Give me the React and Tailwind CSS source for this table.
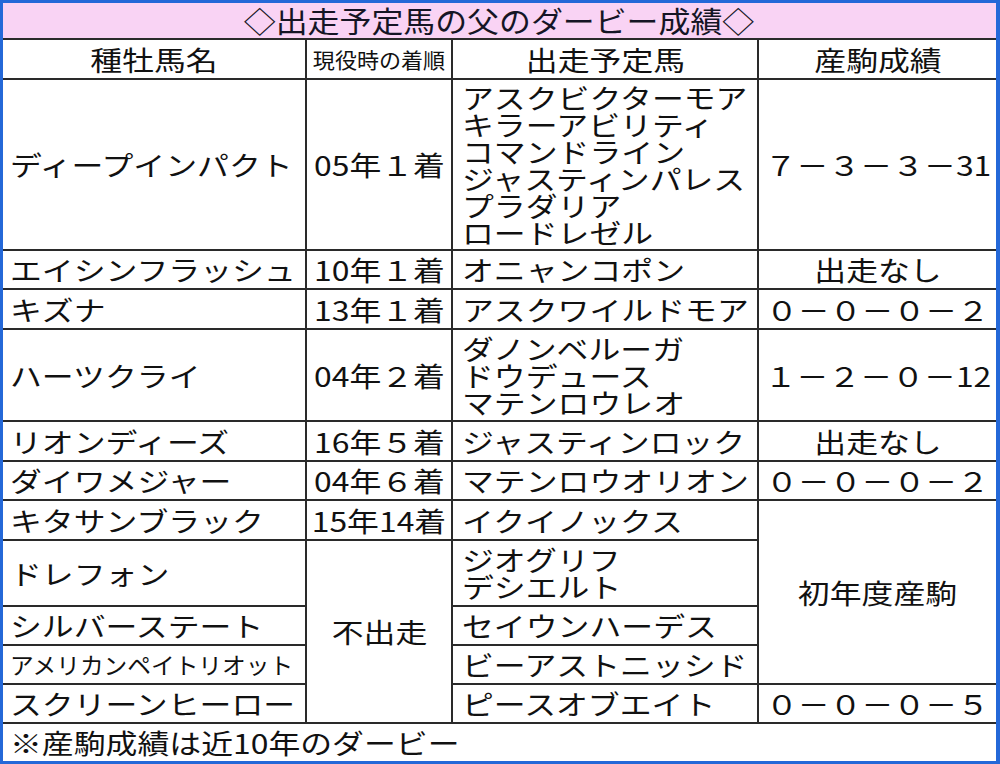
import React from "react";

const FONT = { fontFamily: '"Noto Sans CJK JP", "Noto Sans", sans-serif' };

const cell = "bg-white flex items-center text-[27px] leading-[27px] text-[#111] font-normal";
const L = ({ children }) => (
  <span className="inline-block origin-left scale-x-[1.18] whitespace-nowrap">{children}</span>
);
const C = ({ children }) => (
  <span className="inline-block origin-center scale-x-[1.18] whitespace-nowrap">{children}</span>
);

const LeftCell = ({ lines, className = "" }) => (
  <div className={`${cell} pl-[7px] ${className}`}>
    <div className="flex flex-col">
      {lines.map((l, i) => (
        <L key={i}>{l}</L>
      ))}
    </div>
  </div>
);
const HorseCell = ({ lines, className = "" }) => (
  <div className={`${cell} pl-[9px] ${className}`}>
    <div className="flex flex-col">
      {lines.map((l, i) => (
        <L key={i}>{l}</L>
      ))}
    </div>
  </div>
);
const CenterCell = ({ children, className = "" }) => (
  <div className={`${cell} justify-center ${className}`}>
    <C>{children}</C>
  </div>
);

export default function App() {
  return (
    <div style={FONT} className="w-[1000px] h-[764px] bg-[#2468d8] pt-[3px] pl-[3px] pr-[4px] pb-[3px]">
      <div className="grid h-full bg-[#2a2a2a] gap-[2px] grid-cols-[302px_144px_304px_237px] grid-rows-[35px_38px_169px_37px_38px_90px_38px_37px_38px_64px_37px_37px_37px_37px]">
        <div className="col-span-4 bg-[#f9d3f4] flex items-center justify-center text-[29px] leading-[29px] text-[#151525] font-normal">
          <span className="inline-block origin-center scale-x-[1.1] whitespace-nowrap">◇出走予定馬の父のダービー成績◇</span>
        </div>

        <CenterCell>種牡馬名</CenterCell>
        <div className={`${cell} justify-center`}>
          <span className="inline-block origin-center scale-x-[1.05] whitespace-nowrap text-[21px] leading-[21px]">現役時の着順</span>
        </div>
        <CenterCell>出走予定馬</CenterCell>
        <CenterCell>産駒成績</CenterCell>

        <LeftCell lines={["ディープインパクト"]} />
        <CenterCell>05年１着</CenterCell>
        <HorseCell lines={["アスクビクターモア", "キラーアビリティ", "コマンドライン", "ジャスティンパレス", "プラダリア", "ロードレゼル"]} />
        <CenterCell>７－３－３－31</CenterCell>

        <LeftCell lines={["エイシンフラッシュ"]} />
        <CenterCell>10年１着</CenterCell>
        <HorseCell lines={["オニャンコポン"]} />
        <CenterCell>出走なし</CenterCell>

        <LeftCell lines={["キズナ"]} />
        <CenterCell>13年１着</CenterCell>
        <HorseCell lines={["アスクワイルドモア"]} />
        <CenterCell>０－０－０－２</CenterCell>

        <LeftCell lines={["ハーツクライ"]} />
        <CenterCell>04年２着</CenterCell>
        <HorseCell lines={["ダノンベルーガ", "ドウデュース", "マテンロウレオ"]} />
        <CenterCell>１－２－０－12</CenterCell>

        <LeftCell lines={["リオンディーズ"]} />
        <CenterCell>16年５着</CenterCell>
        <HorseCell lines={["ジャスティンロック"]} />
        <CenterCell>出走なし</CenterCell>

        <LeftCell lines={["ダイワメジャー"]} />
        <CenterCell>04年６着</CenterCell>
        <HorseCell lines={["マテンロウオリオン"]} />
        <CenterCell>０－０－０－２</CenterCell>

        <CenterCell className="col-start-4 row-start-9 row-span-4">初年度産駒</CenterCell>
        <CenterCell className="col-start-2 row-start-10 row-span-4">不出走</CenterCell>

        <LeftCell lines={["キタサンブラック"]} />
        <CenterCell>15年14着</CenterCell>
        <HorseCell lines={["イクイノックス"]} />

        <LeftCell lines={["ドレフォン"]} />
        <HorseCell lines={["ジオグリフ", "デシエルト"]} />

        <LeftCell lines={["シルバーステート"]} />
        <HorseCell lines={["セイウンハーデス"]} />

        <div className={`${cell} pl-[7px]`}>
          <span className="inline-block origin-left scale-x-[1.03] whitespace-nowrap text-[23px] leading-[23px]">アメリカンペイトリオット</span>
        </div>
        <HorseCell lines={["ビーアストニッシド"]} />

        <LeftCell lines={["スクリーンヒーロー"]} />
        <HorseCell lines={["ピースオブエイト"]} />
        <CenterCell>０－０－０－５</CenterCell>

        <LeftCell className="col-span-4" lines={["※産駒成績は近10年のダービー"]} />
      </div>
    </div>
  );
}
